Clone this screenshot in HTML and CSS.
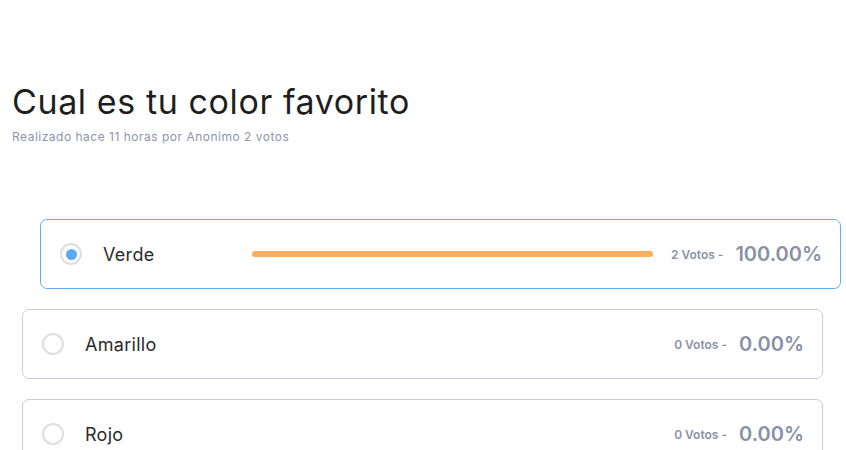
FILE: index.html
```html
<!DOCTYPE html>
<html lang="es">
<head>
<meta charset="utf-8">
<title>Encuesta</title>
<link rel="stylesheet" href="styles.css">
</head>
<body>
<main class="poll">
  <h1 class="poll-title">Cual es tu color favorito</h1>
  <p class="poll-meta">Realizado hace 11 horas por Anonimo 2 votos</p>
  <div class="options">
    <div class="option selected">
      <span class="radio"><span class="dot"></span></span>
      <span class="label">Verde</span>
      <span class="track"><span class="fill" style="width:100%"></span></span>
      <span class="votes">2 Votos -</span>
      <span class="pct">100.00%</span>
    </div>
    <div class="option">
      <span class="radio"></span>
      <span class="label">Amarillo</span>
      <span class="track"><span class="fill" style="width:0%"></span></span>
      <span class="votes">0 Votos -</span>
      <span class="pct">0.00%</span>
    </div>
    <div class="option">
      <span class="radio"></span>
      <span class="label">Rojo</span>
      <span class="track"><span class="fill" style="width:0%"></span></span>
      <span class="votes">0 Votos -</span>
      <span class="pct">0.00%</span>
    </div>
  </div>
</main>
</body>
</html>
```
FILE: styles.css
```css
html, body {
  margin: 0;
  padding: 0;
  background: #ffffff;
  font-family: Inter, "Noto Sans", sans-serif;
  color: #1f1f1f;
  overflow: hidden;
}
.poll {
  padding: 80px 23px 0 12px;
}
.poll-title {
  margin: 0;
  font-size: 34px;
  font-weight: 400;
  line-height: 44px;
  letter-spacing: 0.6px;
  color: #1e1e1e;
}
.poll-meta {
  margin: 6px 0 0 0;
  font-size: 12px;
  line-height: 14px;
  letter-spacing: 0.5px;
  color: #8d95ab;
}
.options {
  margin: 75px 0 0 10px;
  display: flex;
  flex-direction: column;
  gap: 20px;
}
.option {
  height: 70px;
  box-sizing: border-box;
  border: 1.5px solid #c9cbd8;
  border-radius: 7px;
  display: flex;
  align-items: center;
  padding: 0 18px 0 19px;
  background: #fff;
}
.option.selected {
  border-color: #62adf5;
  transform: translateX(18px);
}
.radio {
  width: 22px;
  height: 22px;
  box-sizing: border-box;
  border: 2.5px solid #dedede;
  border-radius: 50%;
  display: flex;
  align-items: center;
  justify-content: center;
  flex: none;
}
.dot {
  width: 11px;
  height: 11px;
  border-radius: 50%;
  background: #5aaaf7;
}
.label {
  margin-left: 21px;
  width: 149px;
  flex: none;
  font-size: 18px;
  letter-spacing: 0.3px;
  color: #2b2b2b;
}
.track {
  flex: 1;
  height: 6px;
  margin-right: 18px;
  display: flex;
}
.fill {
  height: 100%;
  background: #ffad5a;
  border-radius: 3px;
}
.votes {
  font-size: 12px;
  font-weight: 600;
  color: #8a91a6;
  margin-right: 12px;
}
.pct {
  font-size: 20px;
  font-weight: 600;
  color: #8a91a6;
  letter-spacing: 0px;
}
```
